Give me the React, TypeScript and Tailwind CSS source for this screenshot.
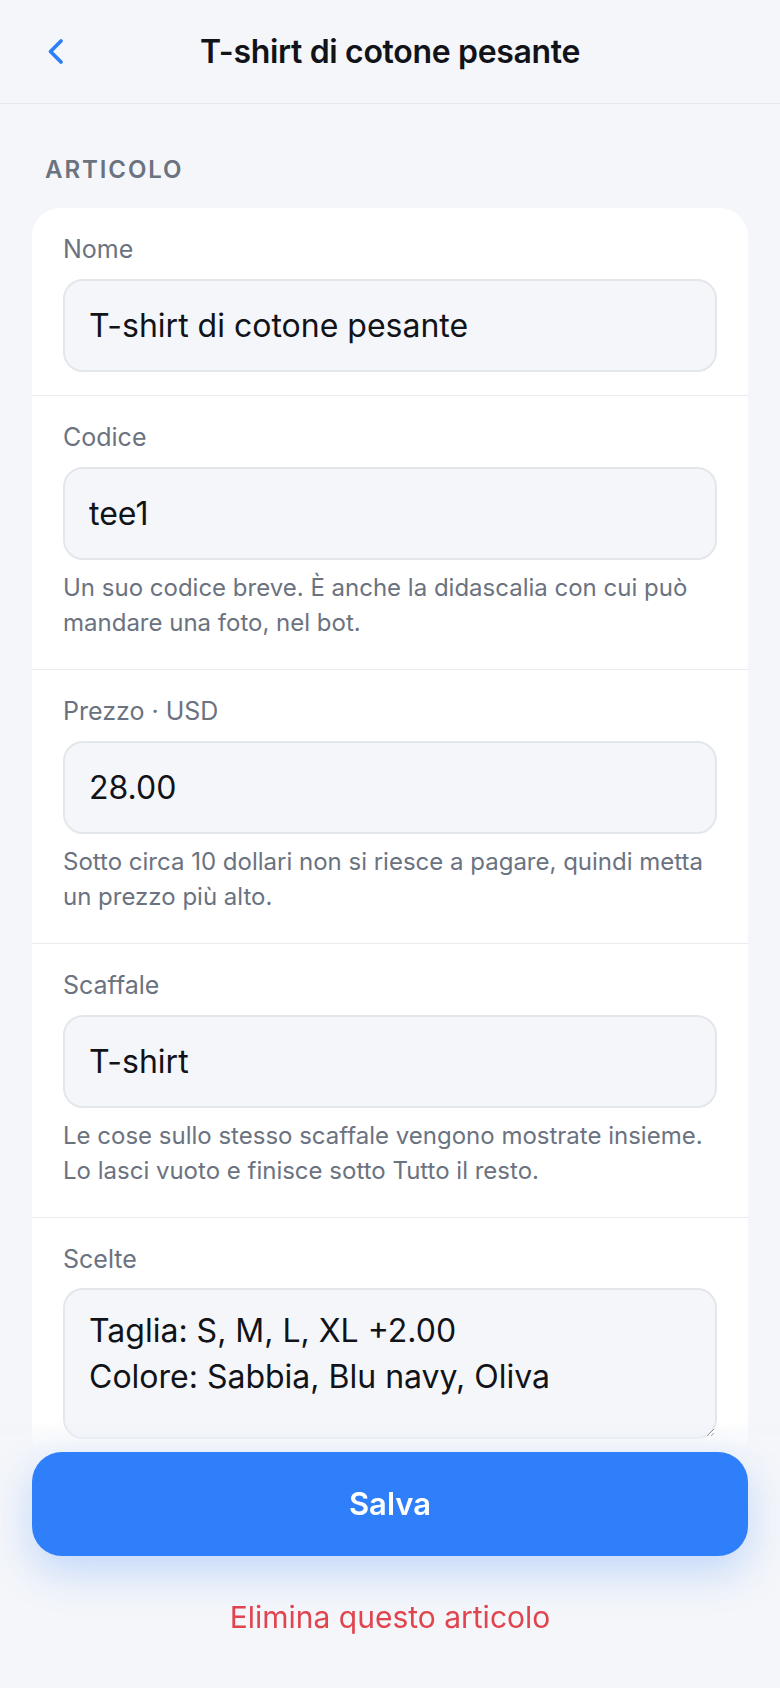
import { useState } from 'react';

type Field = {
  label: string;
  value: string;
  hint?: string;
};

const fields: Field[] = [
  { label: 'Nome', value: 'T-shirt di cotone pesante' },
  {
    label: 'Codice',
    value: 'tee1',
    hint: 'Un suo codice breve. È anche la didascalia con cui può mandare una foto, nel bot.',
  },
  {
    label: 'Prezzo · USD',
    value: '28.00',
    hint: 'Sotto circa 10 dollari non si riesce a pagare, quindi metta un prezzo più alto.',
  },
  {
    label: 'Scaffale',
    value: 'T-shirt',
    hint: 'Le cose sullo stesso scaffale vengono mostrate insieme. Lo lasci vuoto e finisce sotto Tutto il resto.',
  },
];

function FieldRow({ field, onChange }: { field: Field; onChange: (v: string) => void }) {
  return (
    <div className={`border-b border-[#e9ebef] px-[31px] pt-[25px] ${field.hint ? 'pb-[29px]' : 'pb-[23px]'}`}>
      <label className="block text-[25px] leading-[32px] text-[#6b7280]">{field.label}</label>
      <input
        value={field.value}
        onChange={(e) => onChange(e.target.value)}
        className="mt-[14px] block h-[93px] w-full rounded-[20px] border-2 border-[#e3e6eb] bg-[#f4f6fa] px-[24px] text-[32px] text-[#111318] outline-none"
      />
      {field.hint && (
        <p className="mt-[10px] text-[24px] leading-[35px] text-[#6b7280]">{field.hint}</p>
      )}
    </div>
  );
}

export default function App() {
  const [values, setValues] = useState(fields.map((f) => f.value));
  const [options, setOptions] = useState('Taglia: S, M, L, XL +2.00\nColore: Sabbia, Blu navy, Oliva');

  return (
    <div className="min-h-screen bg-[#f4f6fa] font-['Inter','Noto_Sans',sans-serif] text-[#111318]">
      <header className="grid h-[104px] grid-cols-[96px_1fr_96px] items-center border-b border-[#e6e8ec]">
        <button className="flex h-full items-center pl-[46px] text-[#2f7ffa]">
          <svg width="18" height="27" viewBox="0 0 18 27" fill="none">
            <path d="M15 3 L4.5 13.5 L15 24" stroke="currentColor" strokeWidth="3.8" strokeLinecap="round" strokeLinejoin="round" />
          </svg>
        </button>
        <h1 className="text-center text-[32px] font-semibold tracking-[-0.01em]">T-shirt di cotone pesante</h1>
        <div />
      </header>

      <main className="pb-[300px]">
        <h2 className="mt-[50px] px-[45px] text-[24px] font-semibold uppercase leading-[32px] tracking-[0.08em] text-[#6b7280]">
          Articolo
        </h2>
        <div className="mx-[32px] mt-[22px] overflow-hidden rounded-[28px] bg-white">
          {fields.map((f, i) => (
            <FieldRow
              key={f.label}
              field={{ ...f, value: values[i] }}
              onChange={(v) => setValues((prev) => prev.map((p, j) => (j === i ? v : p)))}
            />
          ))}
          <div className="px-[31px] pt-[25px] pb-[24px]">
            <label className="block text-[25px] leading-[32px] text-[#6b7280]">Scelte</label>
            <textarea
              value={options}
              onChange={(e) => setOptions(e.target.value)}
              className="mt-[13px] block h-[151px] w-full rounded-[20px] border-2 border-[#e3e6eb] bg-[#f4f6fa] px-[24px] pt-[18px] text-[32px] leading-[46px] text-[#111318] outline-none"
            />
          </div>
        </div>
      </main>

      <footer className="fixed inset-x-0 bottom-0 bg-[linear-gradient(to_bottom,rgba(244,246,250,0)_0px,#f4f6fa_32px)] px-[32px] pt-[32px] pb-[53px]">
        <button className="flex h-[104px] w-full items-center justify-center rounded-[30px] bg-[#2f7ffa] text-[31px] font-semibold text-white shadow-[0_16px_40px_rgba(47,127,250,0.25)]">
          Salva
        </button>
        <button className="mt-[43px] block w-full text-center text-[30px] leading-[36px] text-[#e0444f]">
          Elimina questo articolo
        </button>
      </footer>
    </div>
  );
}
